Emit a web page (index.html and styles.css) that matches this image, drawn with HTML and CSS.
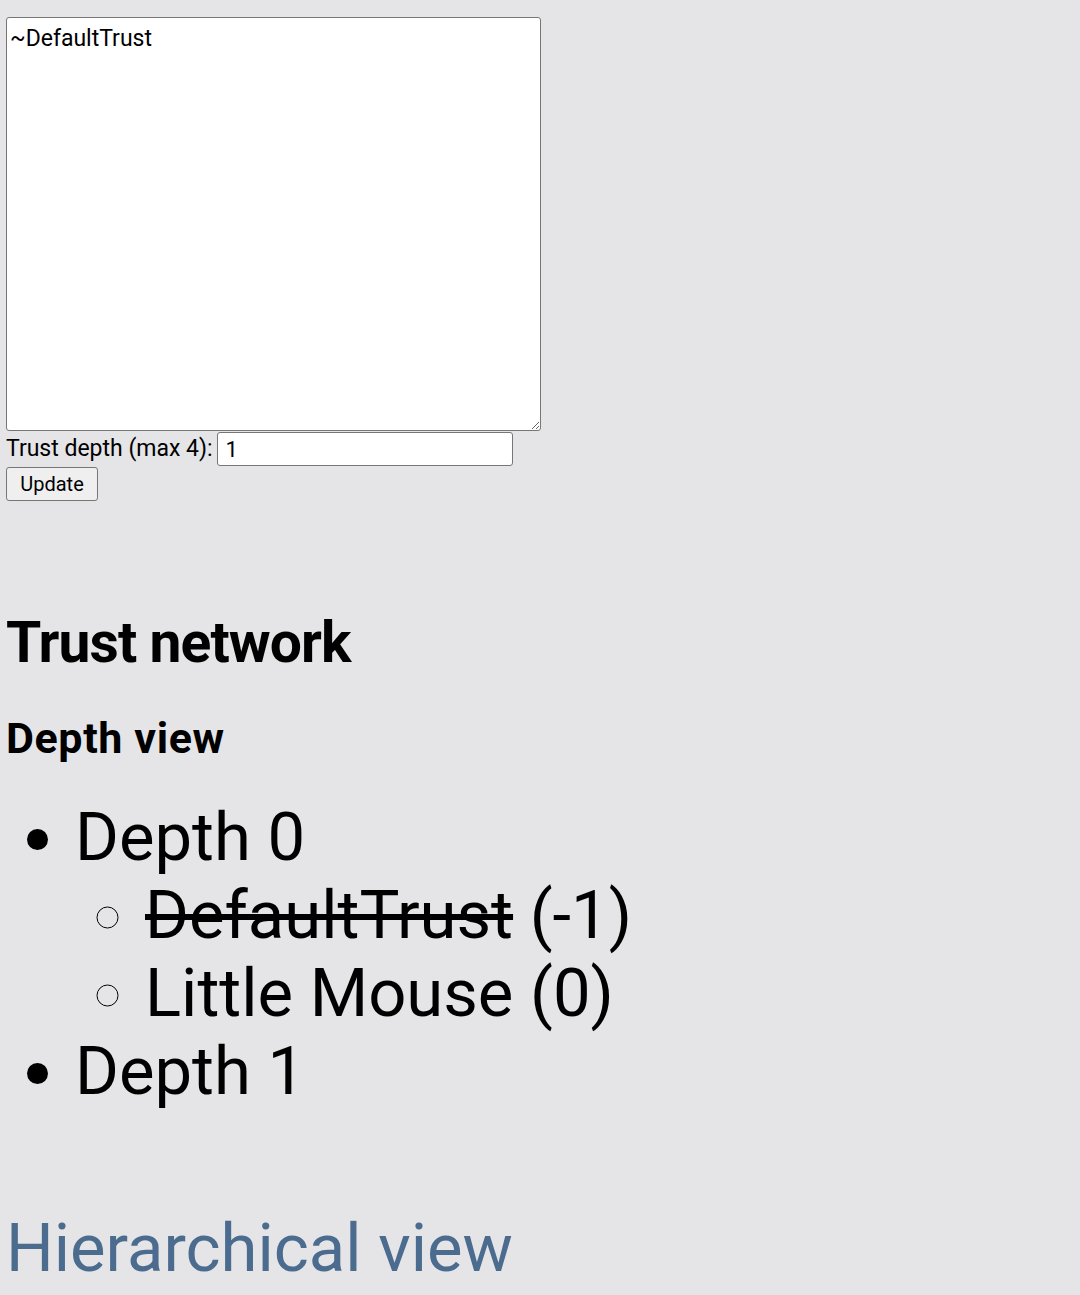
FILE: index.html
```html
<!DOCTYPE html>
<html>
<head>
<meta charset="utf-8">
<link rel="stylesheet" href="styles.css">
</head>
<body>
<form class="trust-form">
  <textarea class="trust-list">~DefaultTrust</textarea>
  <div class="depth-row">
    <label class="depth-label" for="depth">Trust depth (max 4):</label>
    <input id="depth" class="depth-input" type="text" value="1">
  </div>
  <div><button type="button" class="update-btn">Update</button></div>
</form>
<h2 class="title">Trust network</h2>
<h3 class="subtitle">Depth view</h3>
<ul class="depth-list">
  <li>Depth 0
    <ul class="sub-list">
      <li><del>DefaultTrust</del> (-1)</li>
      <li>Little Mouse (0)</li>
    </ul>
  </li>
  <li>Depth 1</li>
</ul>
<div class="hier">Hierarchical view</div>
</body>
</html>
```
FILE: styles.css
```css
html, body {
  margin: 0;
  padding: 0;
}
body {
  background: #e5e5e7;
  font-family: Roboto, "Liberation Sans", sans-serif;
  color: #000;
  padding: 17px 6px 0 6px;
}
.trust-form {
  display: flex;
  flex-direction: column;
  gap: 1px;
  margin: 0;
}
.trust-list {
  box-sizing: border-box;
  width: 535px;
  height: 414px;
  margin: 0;
  padding: 7px 3px;
  border: 1px solid #767676;
  border-radius: 3px;
  background: #fff;
  font-family: Roboto, "Liberation Sans", sans-serif;
  font-size: 23px;
  color: #000;
  resize: vertical;
}
.depth-row {
  display: flex;
  align-items: center;
  gap: 4px;
  height: 34px;
}
.depth-label {
  font-size: 23px;
  line-height: 34px;
}
.depth-input {
  box-sizing: border-box;
  width: 296px;
  height: 34px;
  margin: 0;
  padding: 0 8px;
  border: 1px solid #767676;
  border-radius: 3px;
  background: #fff;
  font-family: Roboto, "Liberation Sans", sans-serif;
  font-size: 22px;
  color: #000;
}
.update-btn {
  box-sizing: border-box;
  width: 92px;
  height: 34px;
  margin: 0;
  padding: 0;
  border: 1px solid #767676;
  border-radius: 3px;
  background: #efefef;
  font-family: Roboto, "Liberation Sans", sans-serif;
  font-size: 20px;
  color: #000;
}
.title {
  font-size: 57px;
  font-weight: 700;
  letter-spacing: -0.9px;
  line-height: normal;
  margin: 108px 0 0 0;
}
.subtitle {
  font-size: 43px;
  font-weight: 700;
  letter-spacing: 0.6px;
  line-height: normal;
  margin: 37px 0 0 0;
}
.depth-list {
  font-size: 67px;
  line-height: 78px;
  margin: 35px 0 0 0;
  padding-left: 69px;
}
.sub-list {
  margin: 0;
  padding-left: 70px;
}
.hier {
  font-size: 67px;
  color: #4b6c8e;
  line-height: normal;
  margin-top: 99px;
}
```
